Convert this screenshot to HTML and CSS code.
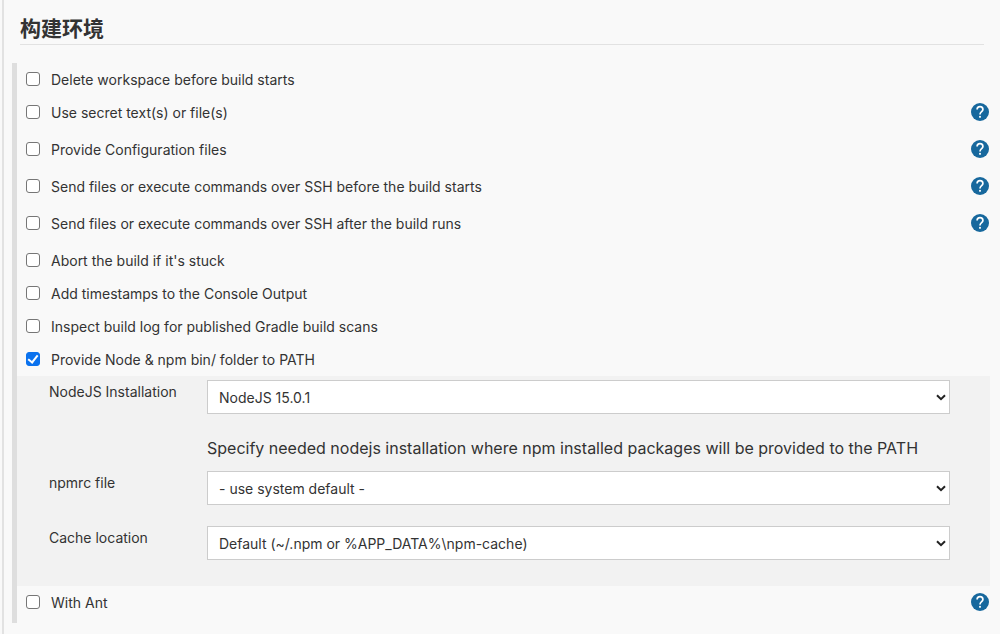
FILE: index.html
```html
<!DOCTYPE html>
<html lang="zh-CN">
<head>
<meta charset="utf-8">
<title>构建环境</title>
<link rel="stylesheet" href="styles.css">
</head>
<body>
<svg class="sprite" aria-hidden="true">
  <symbol id="help" viewBox="0 0 18 18">
    <circle cx="9" cy="9" r="9" fill="#17689d"/>
    <path d="M6.1 6.6C6.1 4.700 7.300 3.700 9 3.700s2.900 1.100 2.900 2.700C11.900 8.700 9 8.600 9 11.500" fill="none" stroke="#fff" stroke-width="1.700"/>
    <rect x="8.100" y="12.900" width="1.800" height="1.800" fill="#fff"/>
  </symbol>
</svg>
<main class="page">
  <form class="config">
    <h1 class="title">构建环境</h1>
    <div class="options">
      <div class="row"><label class="option"><input class="check" type="checkbox">Delete workspace before build starts</label></div>
      <div class="row row-help"><label class="option"><input class="check" type="checkbox">Use secret text(s) or file(s)</label><button class="help" type="button" aria-label="Help"><svg class="icon"><use href="#help"/></svg></button></div>
      <div class="row row-help"><label class="option"><input class="check" type="checkbox">Provide Configuration files</label><button class="help" type="button" aria-label="Help"><svg class="icon"><use href="#help"/></svg></button></div>
      <div class="row row-help"><label class="option"><input class="check" type="checkbox">Send files or execute commands over SSH before the build starts</label><button class="help" type="button" aria-label="Help"><svg class="icon"><use href="#help"/></svg></button></div>
      <div class="row row-help"><label class="option"><input class="check" type="checkbox">Send files or execute commands over SSH after the build runs</label><button class="help" type="button" aria-label="Help"><svg class="icon"><use href="#help"/></svg></button></div>
      <div class="row"><label class="option"><input class="check" type="checkbox">Abort the build if it's stuck</label></div>
      <div class="row"><label class="option"><input class="check" type="checkbox">Add timestamps to the Console Output</label></div>
      <div class="row"><label class="option"><input class="check" type="checkbox">Inspect build log for published Gradle build scans</label></div>
      <div class="row"><label class="option"><input class="check" type="checkbox" checked>Provide Node &amp; npm bin/ folder to PATH</label></div>
      <div class="panel">
        <label class="name" for="node">NodeJS Installation</label>
        <div class="field">
          <div class="pick"><select class="select" id="node"><option>NodeJS 15.0.1</option></select><svg class="arrow" viewBox="0 0 10 7"><path d="M1 1.200l4 4 4-4"/></svg></div>
          <p class="note">Specify needed nodejs installation where npm installed packages will be provided to the PATH</p>
        </div>
        <label class="name" for="npmrc">npmrc file</label>
        <div class="field field-plain">
          <div class="pick"><select class="select" id="npmrc"><option>- use system default -</option></select><svg class="arrow" viewBox="0 0 10 7"><path d="M1 1.200l4 4 4-4"/></svg></div>
        </div>
        <label class="name" for="cache">Cache location</label>
        <div class="field field-plain">
          <div class="pick"><select class="select" id="cache"><option>Default (~/.npm or %APP_DATA%\npm-cache)</option></select><svg class="arrow" viewBox="0 0 10 7"><path d="M1 1.200l4 4 4-4"/></svg></div>
        </div>
      </div>
      <div class="row row-help"><label class="option"><input class="check" type="checkbox">With Ant</label><button class="help" type="button" aria-label="Help"><svg class="icon"><use href="#help"/></svg></button></div>
    </div>
  </form>
</main>
</body>
</html>
```
FILE: styles.css
```css
* { box-sizing: border-box; }
body {
  margin: 0;
  background: #f9f9f9;
  color: #333;
  font: 14px/20px Inter, "Noto Sans CJK SC", sans-serif;
}
.sprite { position: absolute; width: 0; height: 0; }
.page { padding-left: 2px; }
.config {
  min-height: 100vh;
  padding: 13px 10px 11px 8px;
  border-left: 2px solid #e2e2e2;
}
.title {
  margin: 0 6px 18px 8px;
  border-bottom: 1px solid #e2e2e2;
  font-size: 21px;
  line-height: 31px;
  font-weight: 700;
}
.options { border-left: 5px solid #dedede; }
.row {
  display: flex;
  justify-content: space-between;
  align-items: flex-start;
  padding: 0 1px 0 9px;
}
.row-help { padding-bottom: 4px; }
.option {
  display: flex;
  align-items: center;
  gap: 11px;
  height: 33px;
}
.check {
  appearance: none;
  display: grid;
  place-items: center;
  width: 14px;
  height: 14px;
  margin: 0 0 2px;
  border: 1px solid #767676;
  border-radius: 3px;
  background: #fff;
}
.check:checked { border-color: #0b72ee; background: #0b72ee; }
.check:checked::after {
  content: "";
  box-sizing: border-box;
  width: 6px;
  height: 10px;
  margin-bottom: 2px;
  border: solid #fff;
  border-width: 0 2px 2px 0;
  transform: rotate(38deg);
}
.help {
  width: 18px;
  height: 18px;
  margin-top: 7px;
  padding: 0;
  border: 0;
  background: none;
}
.icon { display: block; width: 18px; height: 18px; }
.panel {
  display: grid;
  grid-template-columns: 158px 1fr;
  row-gap: 13px;
  padding: 4px 40px 18px 32px;
  background: #f2f2f2;
}
.name { padding-top: 2px; }
.field-plain { padding-bottom: 8px; }
.pick { display: grid; align-items: center; }
.select {
  grid-area: 1 / 1;
  appearance: none;
  width: 100%;
  height: 34px;
  padding: 2px 11px 0;
  border: 1px solid #ccc;
  border-radius: 0;
  background: #fff;
  color: #333;
  font: inherit;
}
.arrow {
  grid-area: 1 / 1;
  justify-self: end;
  width: 10px;
  height: 7px;
  margin-right: 4px;
  fill: none;
  stroke: #222;
  stroke-width: 2;
  pointer-events: none;
}
.note {
  margin: 24px 0 0;
  font-size: 16px;
  line-height: 20px;
}
```
